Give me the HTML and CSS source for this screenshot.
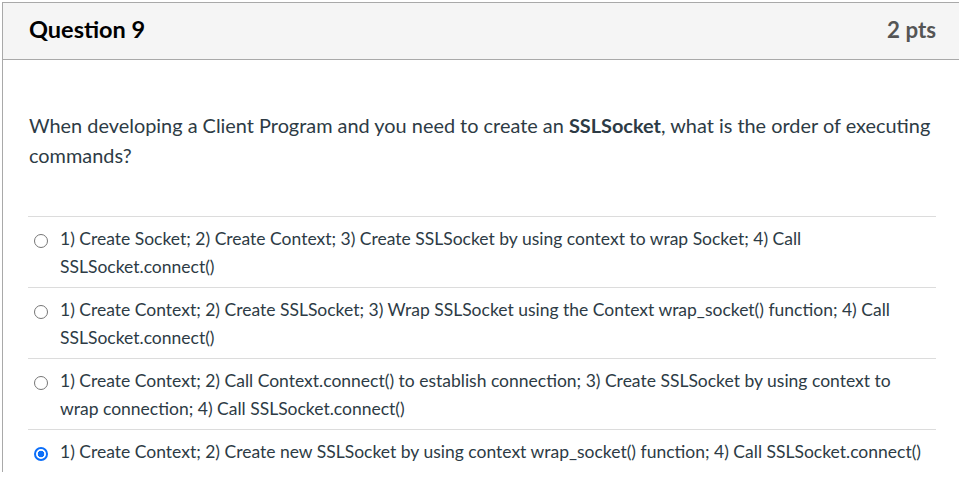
FILE: index.html
```html
<!DOCTYPE html>
<html>
<head>
<meta charset="utf-8">
<link rel="stylesheet" href="styles.css">
</head>
<body>
<div class="question">
  <div class="q-header">
    <span class="q-title">Question 9</span>
    <span class="q-pts">2 pts</span>
  </div>
  <div class="q-body">
    <p class="q-text">When developing a Client Program and you need to create an <strong>SSLSocket</strong>, what is the order of executing commands?</p>
    <div class="answers">
      <div class="answer"><span class="radio"></span><span class="answer-text">1) Create Socket; 2) Create Context; 3) Create SSLSocket by using context to wrap Socket; 4) Call SSLSocket.connect()</span></div>
      <div class="answer"><span class="radio"></span><span class="answer-text">1) Create Context; 2) Create SSLSocket; 3) Wrap SSLSocket using the Context wrap_socket() function; 4) Call SSLSocket.connect()</span></div>
      <div class="answer"><span class="radio"></span><span class="answer-text">1) Create Context; 2) Call Context.connect() to establish connection; 3) Create SSLSocket by using context to wrap connection; 4) Call SSLSocket.connect()</span></div>
      <div class="answer"><span class="radio checked"></span><span class="answer-text">1) Create Context; 2) Create new SSLSocket by using context wrap_socket() function; 4) Call SSLSocket.connect()</span></div>
    </div>
  </div>
</div>
</body>
</html>
```
FILE: styles.css
```css
html, body {
  margin: 0;
  padding: 0;
  background: #fff;
  overflow: hidden;
}
body {
  font-family: Lato, "Liberation Sans", sans-serif;
  color: #2d3b45;
  padding: 2px 0 0 2px;
}
.question {
  box-sizing: border-box;
  width: 959px;
  border-left: 1px solid #a9a9a9;
  border-top: 1px solid #a9a9a9;
}
.q-header {
  display: flex;
  justify-content: space-between;
  align-items: center;
  height: 52px;
  background: #f5f5f5;
  border-bottom: 1px solid #a9a9a9;
  padding: 0 25px 4px 26px;
  box-sizing: content-box;
}
.q-title {
  font-weight: 700;
  font-size: 23.5px;
  color: #000;
}
.q-pts {
  font-weight: 700;
  font-size: 22.3px;
  color: #555;
}
.q-body {
  padding: 0 25px;
}
.q-text {
  margin: 50px 0 0 1px;
  font-size: 19.9px;
  line-height: 30px;
}
.q-text strong {
  font-weight: 700;
}
.answers {
  margin-top: 46px;
  border-top: 1px solid #dcdcdc;
}
.answer {
  display: flex;
  align-items: flex-start;
  padding: 8px 0 6px;
  border-bottom: 1px solid #dcdcdc;
  font-size: 17.5px;
  line-height: 28px;
}
.answer:last-child {
  border-bottom: none;
}
.radio {
  flex: none;
  box-sizing: border-box;
  width: 14px;
  height: 14px;
  margin: 9px 12px 0 6px;
  border: 1px solid #767676;
  border-radius: 50%;
  background: #fff;
}
.radio.checked {
  border: 2px solid #0b6ef9;
  background: radial-gradient(circle, #0b6ef9 0 3px, #fff 3.6px);
}
.answer-text {
  padding-right: 10px;
}
```
